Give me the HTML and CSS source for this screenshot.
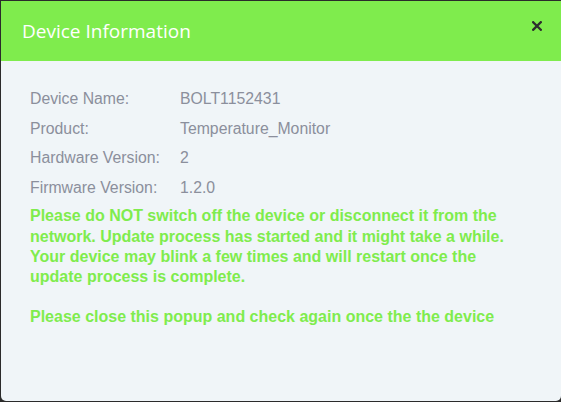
FILE: index.html
```html
<!DOCTYPE html>
<html>
<head>
<meta charset="utf-8">
<link rel="stylesheet" href="styles.css">
</head>
<body>
<div class="modal">
  <div class="modal-header">
    <h2 class="modal-title">Device Information</h2>
    <button class="close" aria-label="Close">
      <svg width="10" height="10" viewBox="0 0 10 10"><path d="M1.2 1.2 L8.8 8.8 M8.8 1.2 L1.2 8.8" stroke="#2e2e2e" stroke-width="2.3" stroke-linecap="square"/></svg>
    </button>
  </div>
  <div class="modal-body">
    <div class="info">
      <div class="label">Device Name:</div><div class="value">BOLT1152431</div>
      <div class="label">Product:</div><div class="value">Temperature_Monitor</div>
      <div class="label">Hardware Version:</div><div class="value">2</div>
      <div class="label">Firmware Version:</div><div class="value">1.2.0</div>
    </div>
    <p class="notice">Please do NOT switch off the device or disconnect it from the network. Update process has started and it might take a while. Your device may blink a few times and will restart once the update process is complete.</p>
    <p class="notice">Please close this popup and check again once the the device</p>
  </div>
</div>
</body>
</html>
```
FILE: styles.css
```css
html, body {
  margin: 0;
  padding: 0;
  background: #2b2b2b;
  width: 561px;
  height: 402px;
  overflow: hidden;
}
.modal {
  margin: 1px 0 0 1px;
  width: 560px;
  height: 400px;
  background: #f0f5f8;
  border-radius: 0 0 5px 5px;
  overflow: hidden;
  display: flex;
  flex-direction: column;
}
.modal-header {
  background: #7fec4d;
  height: 60px;
  display: flex;
  align-items: center;
  justify-content: space-between;
  padding: 0 19px 0 21px;
  flex-shrink: 0;
}
.modal-title {
  margin: 0;
  font-family: "Open Sans", sans-serif;
  font-weight: 400;
  font-size: 19px;
  line-height: 26px;
  color: #ffffff;
}
.close {
  background: none;
  border: 0;
  padding: 0;
  width: 10px;
  height: 10px;
  display: flex;
  position: relative;
  top: -5px;
}
.modal-body {
  padding: 23px 40px 0 29px;
  font-family: "Liberation Sans", Arial, sans-serif;
}
.info {
  display: grid;
  grid-template-columns: 150px auto;
  font-size: 15.8px;
  line-height: 29.6px;
  color: #8b8f9c;
}
.notice {
  margin: 4px 0 20px 0;
  font-size: 16px;
  line-height: 20.2px;
  font-weight: 700;
  color: #7fec4d;
}
```
